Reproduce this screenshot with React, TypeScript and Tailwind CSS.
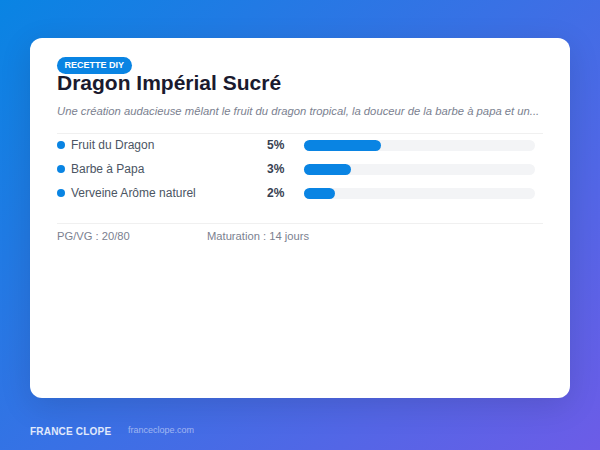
import React from "react";

const items = [
  { name: "Fruit du Dragon", pct: "5%", width: "w-[77px]" },
  { name: "Barbe à Papa", pct: "3%", width: "w-[47px]" },
  { name: "Verveine Arôme naturel", pct: "2%", width: "w-[31px]" },
];

const App: React.FC = () => {
  return (
    <div className="w-[600px] h-[450px] overflow-hidden flex flex-col bg-[linear-gradient(135deg,#0984e3_0%,#6c5ce7_100%)] font-['Liberation_Sans',Arial,sans-serif]">
      <div className="mt-[38px] mx-[30px] h-[360px] bg-white rounded-[12px] shadow-[0_8px_32px_rgba(0,0,0,0.12)] px-[27px] pt-[19px]">
        <span className="block w-fit h-[17px] leading-[17px] px-[7.5px] rounded-[10px] bg-[#0984e3] text-white text-[9px] font-bold">
          RECETTE DIY
        </span>
        <h1 className="-mt-[1px] text-[21px] leading-[20px] font-bold text-[#1a1a2e]">
          Dragon Impérial Sucré
        </h1>
        <p className="mt-[11px] text-[11.27px] leading-[14px] italic text-[#7b8190] whitespace-nowrap">
          Une création audacieuse mêlant le fruit du dragon tropical, la douceur de la barbe à papa et un...
        </p>
        <div className="mt-[15px] border-t border-[#f0f0f0] pb-[19px] flex flex-col gap-[2px]">
          {items.map((item) => (
            <div key={item.name} className="h-[22px] flex items-center">
              <span className="w-[8px] h-[8px] rounded-full bg-[#0984e3]" />
              <span className="ml-[6px] w-[196px] text-[12px] text-[#4b5563]">{item.name}</span>
              <span className="w-[37px] text-[12px] font-bold text-[#374151]">{item.pct}</span>
              <div className="w-[231px] h-[11px] rounded-full bg-[#f3f4f6]">
                <div className={`h-full rounded-full bg-[#0984e3] ${item.width}`} />
              </div>
            </div>
          ))}
        </div>
        <div className="border-t border-[#f0f0f0] pt-[5px] flex text-[11.2px] leading-[14px] text-[#7b8190]">
          <span className="w-[150px]">PG/VG : 20/80</span>
          <span>Maturation : 14 jours</span>
        </div>
      </div>
      <div className="flex-1 flex items-center px-[30px] pt-[14px]">
        <span className="w-[98px] text-[10px] font-bold tracking-[0.2px] text-white/85">FRANCE CLOPE</span>
        <span className="text-[9px] text-white/50">franceclope.com</span>
      </div>
    </div>
  );
};

export default App;
